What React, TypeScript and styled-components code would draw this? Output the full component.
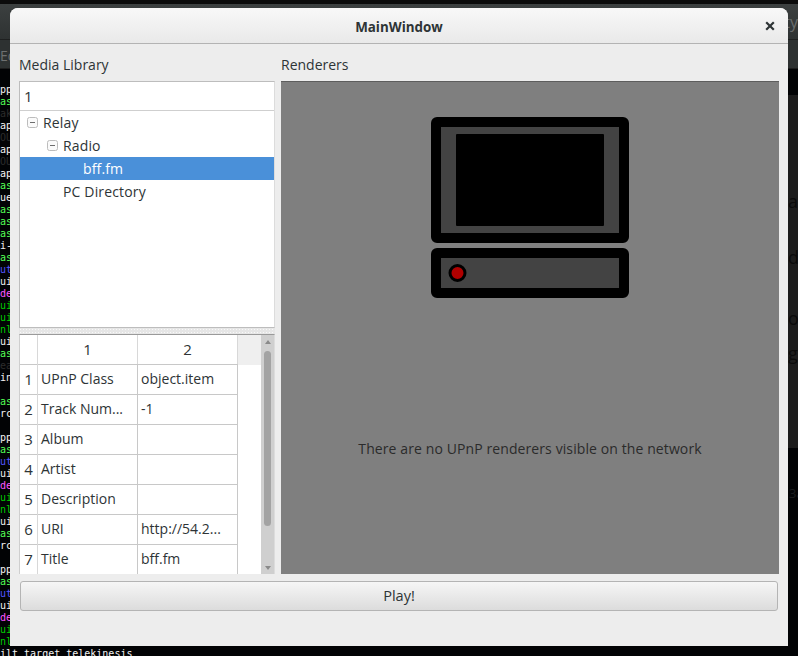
import React from "react";
import styled, { createGlobalStyle } from "styled-components";

const Global = createGlobalStyle`
  html, body { margin: 0; padding: 0; background: #000; }
  body { font-family: "Open Sans", "Noto Sans", sans-serif; }
`;

const Desktop = styled.div`
  position: relative;
  width: 798px;
  height: 656px;
  overflow: hidden;
  background: #020305;
`;

const TopEdge = styled.div`
  height: 4px;
  background: #0b0b0b;
`;

const TermTitle = styled.div`
  height: 36px;
  box-sizing: border-box;
  display: flex;
  justify-content: flex-end;
  align-items: center;
  background: linear-gradient(#3c4040, #2e3232);
  border-bottom: 1px solid #1e2020;
  color: #6a6d6d;
  font-size: 16px;
`;

const TermMenu = styled.div`
  height: 29px;
  box-sizing: border-box;
  padding: 6px 0 0 0;
  background: #2d3131;
  border-bottom: 1px solid #1c1c1c;
  color: #6e7070;
  font-size: 14px;
  line-height: 20px;
  white-space: nowrap;
`;

const Term = styled.pre`
  margin: 0;
  padding: 15px 0 0 0;
  font-family: "DejaVu Sans Mono", monospace;
  font-size: 10px;
  line-height: 12px;
`;

const TermLine = styled.div<{ $c: string }>`
  height: 12px;
  color: ${(p) => p.$c};
  white-space: pre;
`;

const RightDim = styled.div`
  position: absolute;
  left: 788px;
  top: 95px;
  width: 10px;
  height: 353px;
  background: #1c1c1c;
  border-top: 0;
  color: #0a0a0a;
  font-size: 18px;
  overflow: hidden;
`;

const DimGlyph = styled.div<{ $top: number }>`
  position: absolute;
  left: 0;
  top: ${(p) => p.$top}px;
  line-height: 20px;
`;

const FarDim = styled.div`
  position: absolute;
  left: 789px;
  top: 485px;
  line-height: 16px;
  font-size: 13px;
  color: #1a1c1e;
`;

const Win = styled.div`
  position: absolute;
  left: 10px;
  top: 8px;
  width: 778px;
  height: 638px;
  display: flex;
  flex-direction: column;
  background: #ededed;
  border-radius: 8px 8px 0 0;
  color: #2e3436;
  font-size: 14px;
`;

const TitleBar = styled.div`
  position: relative;
  height: 36px;
  flex: none;
  box-sizing: border-box;
  display: flex;
  align-items: center;
  justify-content: center;
  padding-top: 2px;
  background: linear-gradient(#f8f8f8, #e9e9e9);
  border-bottom: 1px solid #b3b3b3;
  border-radius: 8px 8px 0 0;
  font-weight: 700;
  font-size: 13.4px;
  color: #2e3436;
`;

const CloseIcon = styled.svg`
  position: absolute;
  right: 13px;
  top: 13px;
  width: 10px;
  height: 10px;
`;

const Body = styled.div`
  display: flex;
  gap: 6px;
  padding: 0 9px 0 9px;
  height: 530px;
  flex: none;
`;

const LeftCol = styled.div`
  width: 256px;
  display: flex;
  flex-direction: column;
`;

const RightCol = styled.div`
  width: 498px;
  display: flex;
  flex-direction: column;
`;

const PaneLabel = styled.div`
  height: 37px;
  flex: none;
  box-sizing: border-box;
  padding-top: 11px;
  line-height: 20px;
  font-size: 14px;
`;

const TreeBox = styled.div`
  height: 247px;
  flex: none;
  box-sizing: border-box;
  border: 1px solid #bdbdbd;
  border-right-color: #dcdcdc;
  background: #fff;
`;

const TreeHeader = styled.div`
  height: 29px;
  box-sizing: border-box;
  padding-left: 4px;
  border-bottom: 1px solid #cfcfcf;
  line-height: 29px;
  font-size: 15px;
`;

const TreeRow = styled.div<{ $indent: number; $selected?: boolean }>`
  height: 23px;
  display: flex;
  align-items: center;
  padding-left: ${(p) => p.$indent}px;
  line-height: 23px;
  font-size: 14px;
  letter-spacing: 0.15px;
  background: ${(p) => (p.$selected ? "#4a90d9" : "transparent")};
  color: ${(p) => (p.$selected ? "#fff" : "#2e3436")};
`;

const Expander = styled.svg`
  width: 11px;
  height: 11px;
  margin-right: 5px;
  flex: none;
`;

const Splitter = styled.div`
  height: 6px;
  flex: none;
  background-color: #e6e6e6;
  background-image: radial-gradient(#f8f8f8 0.7px, transparent 0.8px);
  background-size: 3px 3px;
`;

const TableBox = styled.div`
  height: 240px;
  flex: none;
  box-sizing: border-box;
  display: flex;
  border-top: 1px solid #9a9a9a;
  border-left: 1px solid #cfcfcf;
  border-right: 1px solid #dcdcdc;
  background: #fff;
  overflow: hidden;
`;

const TableArea = styled.div`
  width: 241px;
  flex: none;
  overflow: hidden;
`;

const HeadRow = styled.div`
  display: grid;
  grid-template-columns: 18px 100px 100px 23px;
  height: 29px;
`;

const Row = styled.div`
  display: grid;
  grid-template-columns: 18px 100px 100px 23px;
  height: 30px;
`;

const HeadCell = styled.div`
  box-sizing: border-box;
  background: #fff;
  border-right: 1px solid #d8d8d8;
  border-bottom: 1px solid #c8c8c8;
  text-align: center;
  line-height: 29px;
  font-size: 15px;
`;

const HeadFill = styled.div`
  background: #efefef;
`;

const RowNum = styled.div`
  box-sizing: border-box;
  border-right: 1px solid #d8d8d8;
  border-bottom: 1px solid #c8c8c8;
  text-align: center;
  line-height: 30px;
  font-size: 15px;
`;

const Cell = styled.div`
  box-sizing: border-box;
  border-right: 1px solid #c8c8c8;
  border-bottom: 1px solid #c8c8c8;
  padding-left: 3px;
  line-height: 29px;
  font-size: 14px;
  white-space: nowrap;
  overflow: hidden;
`;

const Scrollbar = styled.div`
  width: 13px;
  flex: none;
  display: flex;
  flex-direction: column;
  align-items: center;
  background: #cfcfcf;
`;

const Arrow = styled.svg`
  width: 8px;
  height: 6px;
  flex: none;
  margin: 4px 0 3px;
`;

const Thumb = styled.div`
  width: 7px;
  height: 175px;
  flex: none;
  margin-top: 3px;
  background: #a3a3a3;
  border-radius: 4px;
`;

const ScrollSpace = styled.div`
  flex: 1;
`;

const Stage = styled.div`
  flex: 1;
  display: flex;
  flex-direction: column;
  align-items: center;
  box-sizing: border-box;
  padding-top: 35px;
  background: #7f7f7f;
  border-top: 1px solid #5d5d5d;
  color: #2b2b2b;
  font-size: 14px;
`;

const StageIcon = styled.svg`
  display: block;
  width: 198px;
  height: 181px;
  flex: none;
`;

const StageMessage = styled.div`
  margin-top: 141px;
  line-height: 20px;
  font-size: 14px;
  letter-spacing: 0.1px;
`;

const Footer = styled.div`
  padding: 7px 10px 0 10px;
`;

const PlayButton = styled.button`
  display: block;
  width: 100%;
  height: 30px;
  padding: 0 0 2px;
  box-sizing: border-box;
  border: 1px solid #b4b4b4;
  border-radius: 3px;
  background: linear-gradient(#f6f6f6, #dcdcdc);
  color: #2e3436;
  font-family: inherit;
  font-size: 14.6px;
`;

const g = "#55ff55";
const w = "#f2f2f2";
const b = "#5555ff";
const m = "#ff55ff";
const d = "#00cc00";
const x = "#2c2c2c";

const lines: [string, string][] = [
  ["pp", w], ["as", g], ["ak", x], ["ap", w], ["OU", x], ["ap", w], ["OU", x], ["ap", w],
  ["as", g], ["ue", w], ["as", g], ["as", g], ["as", g], ["i-", w], ["as", g], ["ut", b],
  ["ui", w], ["de", m], ["ui", d], ["ui", d], ["nl", d], ["ui", w], ["as", g], ["ea", x],
  ["in", w], ["", w], ["as", g], ["rc", w], ["", w], ["pp", w], ["as", g], ["ut", b],
  ["ui", w], ["de", m], ["ui", d], ["nl", d], ["ui", w], ["as", g], ["rc", w], ["", w],
  ["pp", w], ["as", g], ["ut", b], ["ui", w], ["de", m], ["ui", d], ["nl", d],
  ["ilt target telekinesis", w],
];

const tableRows: [string, string][] = [
  ["UPnP Class", "object.item"],
  ["Track Num...", "-1"],
  ["Album", ""],
  ["Artist", ""],
  ["Description", ""],
  ["URI", "http://54.2..."],
  ["Title", "bff.fm"],
  ["", ""],
];

function Minus() {
  return (
    <Expander viewBox="0 0 11 11">
      <rect x="0.5" y="0.5" width="10" height="10" rx="2" fill="#fafafa" stroke="#bcbcbc" />
      <path d="M3 5.5h5" stroke="#6d6d6d" strokeWidth="1" />
    </Expander>
  );
}

export default function App() {
  return (
    <>
      <Global />
      <Desktop>
        <TopEdge />
        <TermTitle>ty</TermTitle>
        <TermMenu>Ed</TermMenu>
        <Term>
          {lines.map(([t, c], i) => (
            <TermLine key={i} $c={c}>{t}</TermLine>
          ))}
        </Term>
        <RightDim>
          <DimGlyph $top={96}>a</DimGlyph>
          <DimGlyph $top={152}>d</DimGlyph>
          <DimGlyph $top={213}>or</DimGlyph>
          <DimGlyph $top={248}>g</DimGlyph>
        </RightDim>
        <FarDim>3a</FarDim>
        <Win>
          <TitleBar>
            MainWindow
            <CloseIcon viewBox="0 0 10 10">
              <path d="M1.2 1.2l7.6 7.6M8.8 1.2l-7.6 7.6" stroke="#2e3436" strokeWidth="2.2" />
            </CloseIcon>
          </TitleBar>
          <Body>
            <LeftCol>
              <PaneLabel>Media Library</PaneLabel>
              <TreeBox>
                <TreeHeader>1</TreeHeader>
                <TreeRow $indent={7}><Minus />Relay</TreeRow>
                <TreeRow $indent={27}><Minus />Radio</TreeRow>
                <TreeRow $indent={63} $selected>bff.fm</TreeRow>
                <TreeRow $indent={43}>PC Directory</TreeRow>
              </TreeBox>
              <Splitter />
              <TableBox>
                <TableArea>
                  <HeadRow>
                    <HeadCell />
                    <HeadCell>1</HeadCell>
                    <HeadCell>2</HeadCell>
                    <HeadFill />
                  </HeadRow>
                  {tableRows.map(([k, v], i) => (
                    <Row key={i}>
                      <RowNum>{i < 7 ? i + 1 : ""}</RowNum>
                      <Cell>{k}</Cell>
                      <Cell>{v}</Cell>
                    </Row>
                  ))}
                </TableArea>
                <Scrollbar>
                  <Arrow viewBox="0 0 8 6">
                    <path d="M4 1L7 5H1z" fill="#8a8a8a" />
                  </Arrow>
                  <Thumb />
                  <ScrollSpace />
                  <Arrow viewBox="0 0 8 6">
                    <path d="M4 5L7 1H1z" fill="#8a8a8a" />
                  </Arrow>
                </Scrollbar>
              </TableBox>
            </LeftCol>
            <RightCol>
              <PaneLabel>Renderers</PaneLabel>
              <Stage>
                <StageIcon viewBox="0 0 198 181">
                  <rect x="5" y="5" width="188" height="116" rx="1" fill="#434343" stroke="#000" strokeWidth="10" strokeLinejoin="round" />
                  <rect x="25" y="17" width="148" height="92" rx="1" fill="#000" />
                  <rect x="5" y="136" width="188" height="40" rx="1" fill="#434343" stroke="#000" strokeWidth="10" strokeLinejoin="round" />
                  <circle cx="26.5" cy="156" r="7.5" fill="#b00000" stroke="#000" strokeWidth="3" />
                </StageIcon>
                <StageMessage>There are no UPnP renderers visible on the network</StageMessage>
              </Stage>
            </RightCol>
          </Body>
          <Footer>
            <PlayButton>Play!</PlayButton>
          </Footer>
        </Win>
      </Desktop>
    </>
  );
}
